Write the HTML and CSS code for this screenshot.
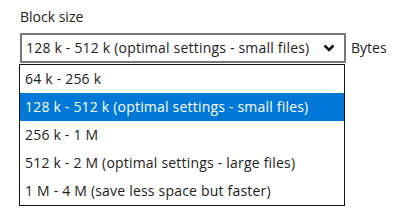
FILE: index.html
```html
<!DOCTYPE html>
<html lang="en">
<head>
<meta charset="UTF-8">
<title>Block size</title>
<link rel="stylesheet" href="styles.css">
</head>
<body>

<div class="field">
  <div class="label">Block size</div>
  <div class="row">
    <div class="combo">
      <div class="select">
        <span>128 k - 512 k (optimal settings - small files)</span>
        <svg class="chevron" width="12" height="8" viewBox="0 0 12 8"><path d="M1.5 1.5 L6 6 L10.5 1.5" fill="none" stroke="#111" stroke-width="2.6"/></svg>
      </div>
      <div class="options">
        <div class="option">64 k - 256 k</div>
        <div class="option selected">128 k - 512 k (optimal settings - small files)</div>
        <div class="option">256 k - 1 M</div>
        <div class="option">512 k - 2 M (optimal settings - large files)</div>
        <div class="option">1 M - 4 M (save less space but faster)</div>
      </div>
    </div>
    <span class="unit">Bytes</span>
  </div>
</div>

</body>
</html>
```

FILE: styles.css
```css
body { margin: 0; padding: 0; background: #fff; font-family: 'Open Sans', sans-serif; font-size: 14px; color: #222; }
.field { padding: 7px 0 0 20px; }
.label { height: 20px; line-height: 20px; margin-bottom: 6px; }
.row { display: flex; align-items: flex-start; gap: 5px; }
.combo { display: flex; flex-direction: column; width: 326px; }
.select {
  box-sizing: border-box;
  height: 30px;
  border: 2px solid #777;
  display: flex;
  align-items: center;
  justify-content: space-between;
  padding: 0 9px 0 4px;
  line-height: 26px;
  letter-spacing: 0.2px;
}
.chevron { display: block; }
.options {
  box-sizing: border-box;
  width: 326px;
  margin: 1px 0 0 -1px;
  border: 1px solid #111;
  background: #fff;
}
.option { height: 28px; line-height: 28px; padding-left: 5px; white-space: nowrap; letter-spacing: 0.2px; }
.option.selected { background: #0078d7; color: #fff; }
.unit { line-height: 20px; margin-top: 5px; }
```
